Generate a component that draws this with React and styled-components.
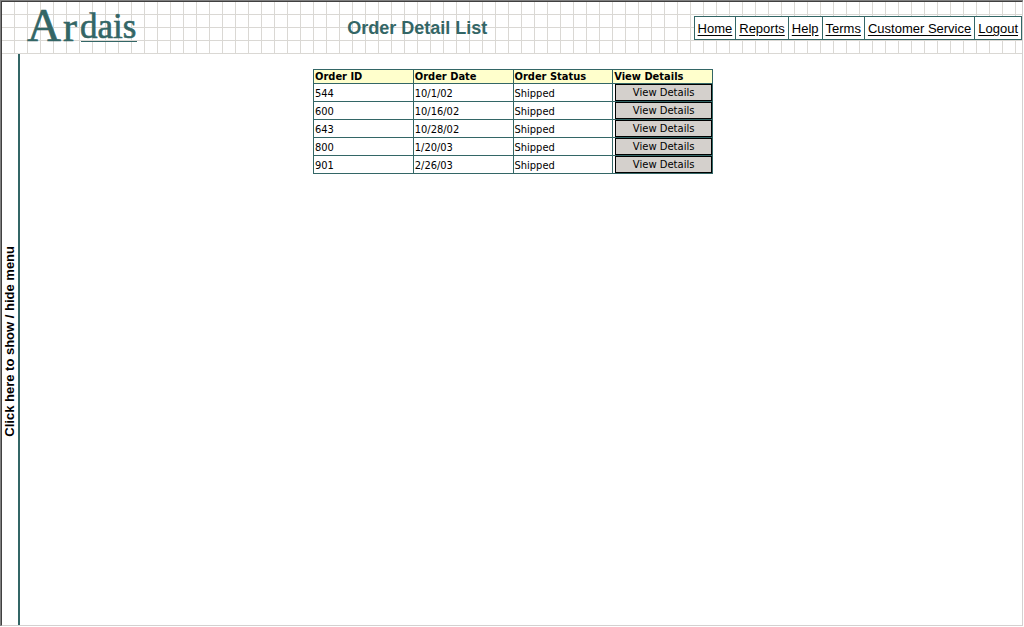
import React from "react";
import styled, { createGlobalStyle } from "styled-components";

const teal = "#336666";
const line = "#dad8d4";

const GlobalStyle = createGlobalStyle`
  * { box-sizing: border-box; }
  body {
    margin: 0;
    background: #fff;
    color: #000;
    font-family: "Liberation Sans", Arial, sans-serif;
  }
`;

const Page = styled.div`
  display: flex;
  min-height: 100vh;
  padding: 0 1px 1px 0;
`;

const Frame = styled.div`
  display: flex;
  flex: 1;
  border: 1px solid #808080;
  border-right: 0;
  border-bottom: 0;
`;

const Inner = styled.div`
  display: flex;
  flex-direction: column;
  flex: 1;
  border: 1px solid #404040;
  border-right-color: #d4d0d0;
  border-bottom-color: #d4d0d0;
`;

const Header = styled.header`
  display: flex;
  align-items: center;
  height: 52px;
  padding-left: 25px;
  background-color: #fff;
  background-image:
    linear-gradient(to right, transparent 12px, ${line} 12px),
    linear-gradient(to bottom, transparent 12px, ${line} 12px);
  background-size: 13px 13px;
`;

const Logo = styled.svg`
  display: block;
  width: 112px;
  height: 52px;
  overflow: visible;
  fill: ${teal};
  stroke: ${teal};
  font-family: "Liberation Serif", serif;
`;

const Title = styled.h1`
  flex: 1;
  margin: 0;
  padding-left: 2px;
  color: ${teal};
  font-size: 18px;
  line-height: 20px;
  text-align: center;
`;

const Nav = styled.nav`
  display: flex;
  border: 1px solid ${teal};
  background: #fff;
`;

const NavLink = styled.a`
  padding: 1px 3px 0;
  color: #000;
  font-size: 13px;
  line-height: 21px;
  text-underline-offset: 2px;

  & + & {
    border-left: 1px solid ${teal};
  }
`;

const Body = styled.div`
  display: flex;
  flex: 1;
`;

const MenuToggle = styled.button`
  display: flex;
  align-items: center;
  justify-content: center;
  width: 18px;
  padding: 4px 0 0;
  border: 0;
  border-right: 2px solid ${teal};
  background: #fff;
  color: #000;
  font: bold 13px/16px "Liberation Sans", Arial, sans-serif;
  cursor: pointer;
`;

const VerticalLabel = styled.span`
  writing-mode: vertical-rl;
  transform: rotate(180deg);
`;

const Main = styled.main`
  flex: 1;
  padding: 15px 16px 15px 0;
`;

const OrderTable = styled.table`
  width: 400px;
  margin: 0 auto;
  border-collapse: collapse;
  table-layout: fixed;
  font: 11px/13px "DejaVu Sans Condensed", Tahoma, sans-serif;
`;

const HeadCell = styled.th`
  height: 14px;
  padding: 0 1px;
  border: 1px solid ${teal};
  background: #ffffcc;
  text-align: left;
  white-space: nowrap;
`;

const Cell = styled.td`
  height: 18px;
  padding: ${(p) => (p.$action ? "0 0 0 2px" : "2px 1px 0")};
  border: 1px solid ${teal};
`;

const ViewButton = styled.button`
  display: block;
  width: 100%;
  height: 17px;
  padding: 0;
  border: 1px solid #000;
  border-radius: 0;
  background: #d4d0cc;
  color: #000;
  font: 10px/14px "DejaVu Sans", Verdana, sans-serif;
  cursor: pointer;
`;

const links = ["Home", "Reports", "Help", "Terms", "Customer Service", "Logout"];
const columns = ["Order ID", "Order Date", "Order Status", "View Details"];
const orders = [
  { id: "544", date: "10/1/02", status: "Shipped" },
  { id: "600", date: "10/16/02", status: "Shipped" },
  { id: "643", date: "10/28/02", status: "Shipped" },
  { id: "800", date: "1/20/03", status: "Shipped" },
  { id: "901", date: "2/26/03", status: "Shipped" },
];

export default function App() {
  return (
    <Page>
      <GlobalStyle />
      <Frame>
        <Inner>
          <Header>
            <Logo viewBox="0 0 112 52" role="img" aria-label="Ardais">
              <text x="0" y="39" fontSize="47" strokeWidth="0.6">A</text>
              <text x="36" y="39" fontSize="42" strokeWidth="0.6">r</text>
              <text x="53" y="36" fontSize="35" strokeWidth="0.6">dais</text>
              <rect x="54" y="39" width="56" height="1" stroke="none" />
            </Logo>
            <Title>Order Detail List</Title>
            <Nav>
              {links.map((name) => (
                <NavLink key={name} href="#">{name}</NavLink>
              ))}
            </Nav>
          </Header>
          <Body>
            <MenuToggle type="button">
              <VerticalLabel>Click here to show / hide menu</VerticalLabel>
            </MenuToggle>
            <Main>
              <OrderTable>
                <thead>
                  <tr>
                    {columns.map((name) => (
                      <HeadCell key={name} scope="col">{name}</HeadCell>
                    ))}
                  </tr>
                </thead>
                <tbody>
                  {orders.map((order) => (
                    <tr key={order.id}>
                      <Cell>{order.id}</Cell>
                      <Cell>{order.date}</Cell>
                      <Cell>{order.status}</Cell>
                      <Cell $action>
                        <ViewButton type="button">View Details</ViewButton>
                      </Cell>
                    </tr>
                  ))}
                </tbody>
              </OrderTable>
            </Main>
          </Body>
        </Inner>
      </Frame>
    </Page>
  );
}
